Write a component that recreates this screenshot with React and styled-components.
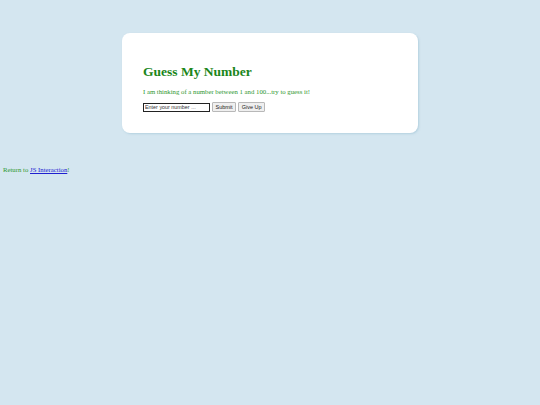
import React, { useState } from 'react'
import styled, { createGlobalStyle } from 'styled-components'

const GlobalStyle = createGlobalStyle`
  html, body {
    margin: 0;
    padding: 0;
    background: #d4e6f0;
  }
  body {
    font-family: "Liberation Serif", "Times New Roman", serif;
    color: #228b22;
  }
`

const Page = styled.div`
  padding-top: 33px;
`

const Card = styled.div`
  width: 296px;
  height: 100px;
  margin: 0 auto;
  box-sizing: border-box;
  padding: 31px 21px 0;
  background: #fff;
  border-radius: 8px;
  box-shadow: 1px 1px 2px rgba(150, 190, 210, 0.5);
`

const Title = styled.h1`
  margin: 0;
  font-size: 13.5px;
  line-height: 16px;
  font-weight: bold;
  color: #1a861a;
`

const Intro = styled.p`
  margin: 8px 0 0;
  font-size: 6.75px;
  line-height: 8px;
  color: #2e962e;
`

const GuessForm = styled.form`
  display: flex;
  align-items: center;
  gap: 2px;
  margin-top: 6px;
`

const NumberInput = styled.input`
  width: 63px;
  height: 7px;
  box-sizing: content-box;
  margin: 0;
  padding: 0 1px;
  border: 1px solid #222;
  font-family: "Liberation Sans", Arial, sans-serif;
  font-size: 5.4px;
  color: #222;
  background: #fff;
  outline: none;

  &::placeholder {
    color: #333;
  }
`

const FormButton = styled.button`
  height: 8px;
  box-sizing: content-box;
  margin: 0;
  padding: 0 2.5px;
  border: 1px solid #b8b8b8;
  border-radius: 1px;
  background: #efefef;
  font-family: "Liberation Sans", Arial, sans-serif;
  font-size: 5.5px;
  line-height: 8px;
  color: #222;
  cursor: pointer;
`

const Footer = styled.p`
  margin: 33px 0 0 3px;
  font-size: 6.75px;
  line-height: 8px;
  color: #2e962e;

  a {
    color: #2020d0;
    text-decoration: underline;
  }
`

const App = () => {
  const [guess, setGuess] = useState('')

  const handleSubmit = e => {
    e.preventDefault()
  }

  return (
    <Page>
      <GlobalStyle />
      <Card>
        <Title>Guess My Number</Title>
        <Intro>I am thinking of a number between 1 and 100...try to guess it!</Intro>
        <GuessForm onSubmit={handleSubmit}>
          <NumberInput
            type="text"
            placeholder="Enter your number ..."
            value={guess}
            onChange={e => setGuess(e.target.value)}
          />
          <FormButton type="submit">Submit</FormButton>
          <FormButton type="button">Give Up</FormButton>
        </GuessForm>
      </Card>
      <Footer>
        Return to <a href="#">JS Interaction</a>!
      </Footer>
    </Page>
  )
}

export default App
